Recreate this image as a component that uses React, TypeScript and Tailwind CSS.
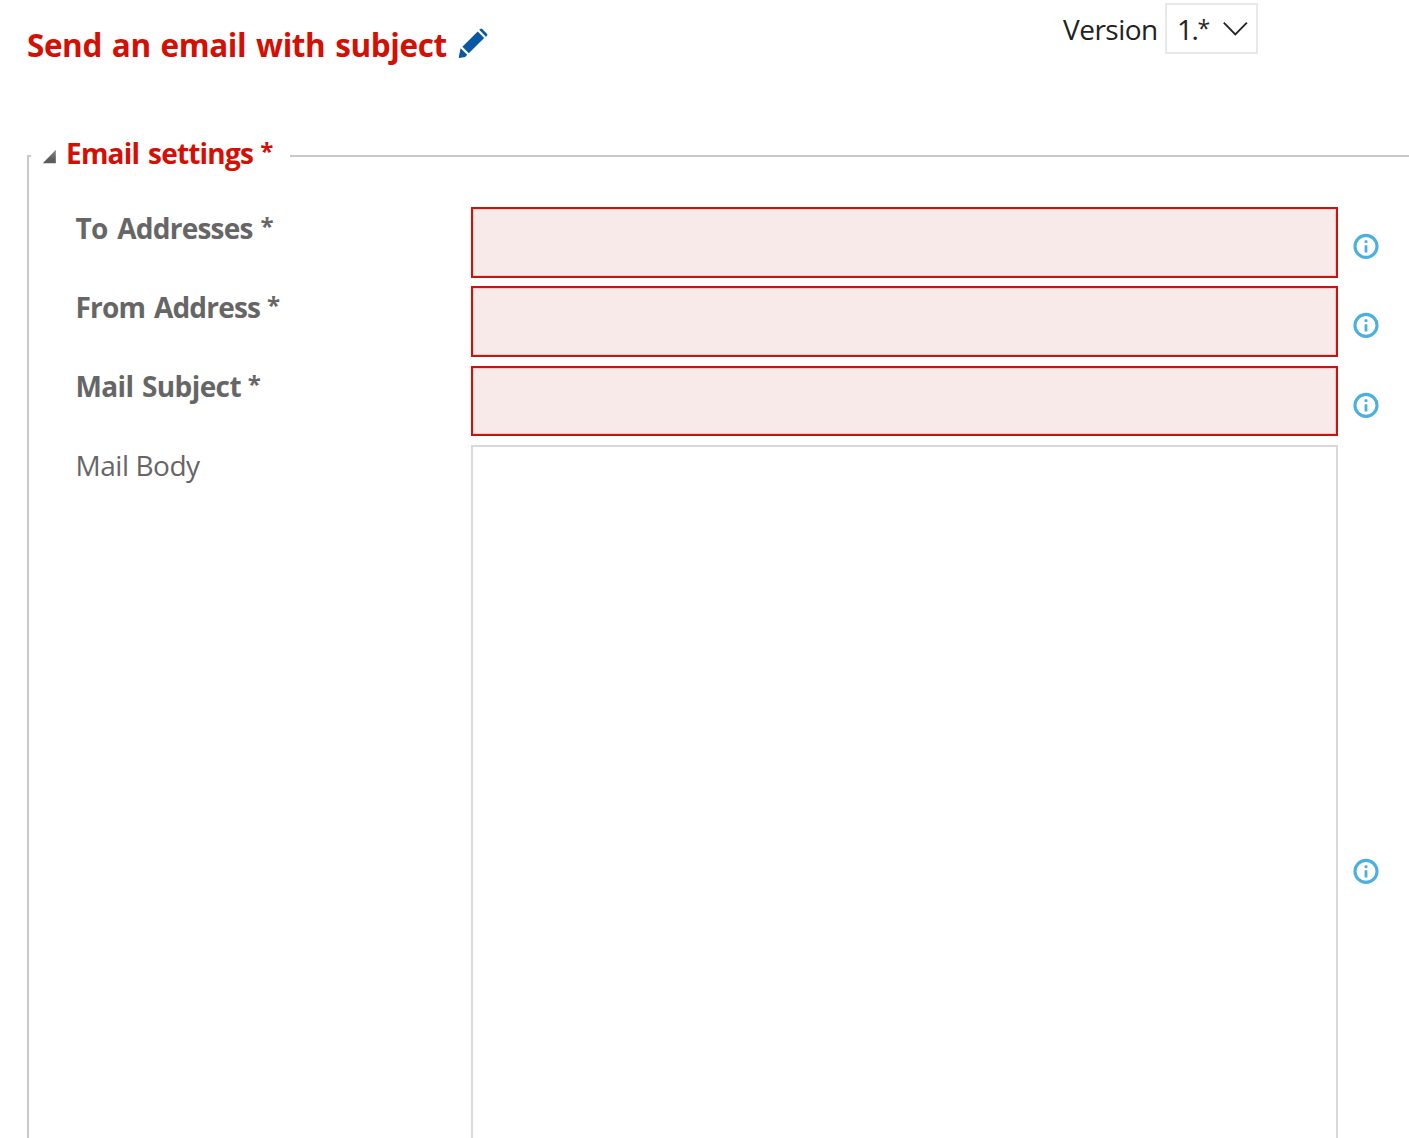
function InfoIcon() {
  return (
    <svg className="mt-[8px] ml-[15px] h-[27px] w-[27px] shrink-0" viewBox="0 0 27 27" fill="none">
      <circle cx="13" cy="13.4" r="11" stroke="#4bb0e0" strokeWidth="3.1" />
      <rect x="11.5" y="7.2" width="3" height="2.8" rx="0.8" fill="#4bb0e0" />
      <rect x="11.6" y="12.2" width="2.8" height="7.4" rx="0.6" fill="#4bb0e0" />
    </svg>
  );
}

function Required() {
  return <span className="-ml-[1.8px] align-[4px] text-[24px] leading-none tracking-normal">*</span>;
}

interface FieldProps {
  label: string;
  labelClass: string;
  boxClass: string;
}

function Field({ label, labelClass, boxClass }: FieldProps) {
  return (
    <div className={`flex items-center self-start ${boxClass}`}>
      <label className={`-ml-[0.5px] w-[395.5px] shrink-0 self-start text-[28px] leading-10 font-bold text-[#666] ${labelClass}`}>
        {label} <Required />
      </label>
      <input className="h-full w-[867px] shrink-0 border-2 border-[#c01810] bg-[#f9eaea] shadow-[inset_0_0_0_1px_#fcc8c6] outline-none" />
      <InfoIcon />
    </div>
  );
}

export default function App() {
  return (
    <div className="flex h-[1138px] w-[1409px] flex-col overflow-hidden bg-white font-['Open_Sans',sans-serif] whitespace-nowrap">
      <header className="flex h-[132px] shrink-0 items-start pl-[27px]">
        <h1 className="mt-[25px] w-[421px] text-[31.5px] leading-10 font-bold tracking-[-0.42px] text-[#d40f04] [word-spacing:2.1px]">
          Send an email with subject
        </h1>
        <svg className="mt-[27px] ml-[9px] h-[32px] w-[32px]" viewBox="0 0 32 32" fill="#0858a4">
          <path d="M20.7 4.6 27.2 11 11.8 26.2 5.4 19.8Z" />
          <path d="m22.2 2.8 1.1-.9q.9-.7 1.9.2l4.7 4.7q.9 1 .1 1.9l-1 1.1Z" />
          <path d="m3.6 21.2 6.6 6.6-2 2.2-5.7 1q-.9 0-.7-1Z" />
        </svg>
        <div className="ml-[574px] flex items-start text-[28px] text-[#222]">
          <span className="mt-[9px] w-[102px] leading-10 tracking-[-0.5px]">Version</span>
          <button className="mt-[3px] flex h-[51px] w-[93px] items-center border-2 border-[#e8e8e8] pl-[10px]">
            <span className="w-[46px] text-left leading-10 tracking-[-1.5px]">
              1.<span className="align-[3px] text-[23px] leading-none">*</span>
            </span>
            <svg className="h-[15px] w-[26px]" viewBox="0 0 26 15" fill="none" stroke="#222" strokeWidth="1.8">
              <path d="m.8 1.6 11.5 11.8L23.9 1.6" />
            </svg>
          </button>
        </div>
      </header>

      <div className="flex h-10 shrink-0 pl-[27px]">
        <div className="mt-[23px] w-[4px] border-t-2 border-l-2 border-[#c8c8c8]" />
        <svg className="mt-[17px] ml-[11px] h-[15px] w-[15px]" viewBox="0 0 15 15">
          <defs>
            <linearGradient id="arrow" x1="0" y1="0" x2="0" y2="1">
              <stop offset="0" stopColor="#8a8a8a" />
              <stop offset="0.7" stopColor="#5c5c5c" />
            </linearGradient>
          </defs>
          <path d="M13.8.8v13.4H.8Z" fill="url(#arrow)" />
        </svg>
        <h2 className="mt-px ml-[9px] w-[224px] text-[28px] leading-10 font-bold tracking-[-0.8px] text-[#d40f04] [word-spacing:2.4px]">
          Email settings <Required />
        </h2>
        <div className="mt-[23px] h-[2px] flex-1 bg-[#c8c8c8]" />
      </div>

      <main className="ml-[27px] grid flex-1 grid-rows-[79px_80px_79px_845px] border-l-2 border-[#c8c8c8] pt-[35px] pl-[47px]">
        <Field label="To Addresses" labelClass="pt-px tracking-[-0.78px] [word-spacing:3.3px]" boxClass="h-[71px]" />
        <Field label="From Address" labelClass="pt-px tracking-[-0.8px] [word-spacing:2.2px]" boxClass="h-[71px]" />
        <Field label="Mail Subject" labelClass="tracking-[-0.6px] [word-spacing:1.8px]" boxClass="h-[70px]" />
        <div className="flex items-center">
          <label className="-ml-[0.5px] w-[395.5px] shrink-0 self-start text-[28px] leading-10 tracking-[-0.45px] text-[#666]">
            Mail Body
          </label>
          <textarea className="h-full w-[867px] shrink-0 resize-none border-2 border-[#d9d9d9] outline-none" />
          <InfoIcon />
        </div>
      </main>
    </div>
  );
}
